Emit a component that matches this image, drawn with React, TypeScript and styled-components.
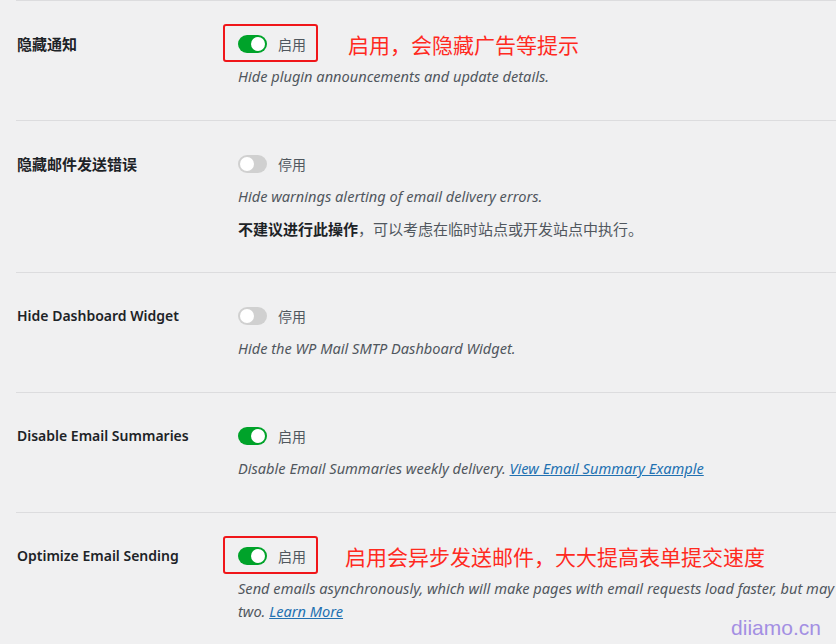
import React from "react";
import styled, { createGlobalStyle } from "styled-components";

const Global = createGlobalStyle`
  html, body { margin: 0; padding: 0; background: #f0f0f1; overflow: hidden; }
  body { width: 836px; height: 644px; position: relative; }
`;

const Page = styled.div`
  padding-left: 16px;
  width: 1300px;
  font-family: "Noto Sans", "Noto Sans CJK SC", sans-serif;
  color: #3c434a;
`;

const Row = styled.div`
  display: grid;
  grid-template-columns: 222px 1fr;
  border-top: 1px solid #dcdcde;
  padding: 32px 0 32px 0;
`;

const Label = styled.div<{ $cjk?: boolean }>`
  padding-left: 1px;
  font-size: ${(p) => (p.$cjk ? "15px" : "14px")};
  font-weight: 600;
  line-height: 22px;
  color: #1d2327;
  font-family: "Noto Sans", "Noto Sans CJK SC", sans-serif;
`;

const Field = styled.div`
  display: flex;
  flex-direction: column;
`;

const ToggleLine = styled.div`
  position: relative;
  display: flex;
  align-items: center;
  height: 22px;
`;

const Switch = styled.span<{ $on: boolean }>`
  position: relative;
  width: 29px;
  height: 18px;
  border-radius: 9px;
  background: ${(p) => (p.$on ? "#00a32a" : "#d0d0d0")};
  flex: none;
  &::after {
    content: "";
    position: absolute;
    top: 2px;
    left: ${(p) => (p.$on ? "13px" : "2px")};
    width: 14px;
    height: 14px;
    border-radius: 50%;
    background: #fff;
  }
`;

const State = styled.span`
  margin-left: 11px;
  font-size: 14px;
  color: #50575e;
  font-family: "Noto Sans CJK SC", sans-serif;
  line-height: 22px;
`;

const Highlight = styled.span`
  position: absolute;
  left: -15px;
  top: -9px;
  width: 91px;
  height: 34px;
  border: 2px solid #f0161a;
  border-radius: 3px;
  pointer-events: none;
`;

const Note = styled.span<{ $offset: number }>`
  margin-left: ${(p) => p.$offset}px;
  font-size: 21px;
  line-height: 22px;
  color: #ff2a1f;
  font-family: "Noto Sans CJK SC", sans-serif;
  white-space: nowrap;
`;

const Desc = styled.p`
  margin: 10px 0 0;
  font-size: 14.6px;
  line-height: 23px;
  font-style: italic;
  color: #50575e;
  white-space: nowrap;
`;

const Plain = styled.p`
  margin: 9px 0 0;
  font-size: 15px;
  line-height: 23px;
  color: #50575e;
  font-family: "Noto Sans CJK SC", sans-serif;
  b { color: #1d2327; font-weight: 700; }
`;

const Link = styled.a`
  color: #2271b1;
  text-decoration: underline;
`;

const Watermark = styled.div`
  position: absolute;
  right: 15px;
  bottom: 4px;
  font-family: "Liberation Sans", Arial, sans-serif;
  font-size: 21px;
  color: #a38fe3;
`;

type Item = {
  label: string;
  cjk?: boolean;
  on: boolean;
  boxed?: boolean;
  note?: string;
  noteOffset?: number;
  desc: React.ReactNode;
  extra?: React.ReactNode;
};

const items: Item[] = [
  {
    label: "隐藏通知",
    cjk: true,
    on: true,
    boxed: true,
    note: "启用，会隐藏广告等提示",
    noteOffset: 42,
    desc: "Hide plugin announcements and update details.",
  },
  {
    label: "隐藏邮件发送错误",
    cjk: true,
    on: false,
    desc: "Hide warnings alerting of email delivery errors.",
    extra: (
      <Plain>
        <b>不建议进行此操作</b>，可以考虑在临时站点或开发站点中执行。
      </Plain>
    ),
  },
  {
    label: "Hide Dashboard Widget",
    on: false,
    desc: "Hide the WP Mail SMTP Dashboard Widget.",
  },
  {
    label: "Disable Email Summaries",
    on: true,
    desc: (
      <>
        Disable Email Summaries weekly delivery. <Link href="#">View Email Summary Example</Link>
      </>
    ),
  },
  {
    label: "Optimize Email Sending",
    on: true,
    boxed: true,
    note: "启用会异步发送邮件，大大提高表单提交速度",
    noteOffset: 39,
    desc: (
      <>
        Send emails asynchronously, which will make pages with email requests load faster, but may delay email delivery by a minute or
        <br />
        two. <Link href="#">Learn More</Link>
      </>
    ),
  },
];

export default function App() {
  return (
    <>
      <Global />
      <Page>
        {items.map((it) => (
          <Row key={it.label}>
            <Label $cjk={it.cjk}>{it.label}</Label>
            <Field>
              <ToggleLine>
                {it.boxed && <Highlight />}
                <Switch $on={it.on} />
                <State>{it.on ? "启用" : "停用"}</State>
                {it.note && <Note $offset={it.noteOffset ?? 40}>{it.note}</Note>}
              </ToggleLine>
              <Desc>{it.desc}</Desc>
              {it.extra}
            </Field>
          </Row>
        ))}
      </Page>
      <Watermark>diiamo.cn</Watermark>
    </>
  );
}
